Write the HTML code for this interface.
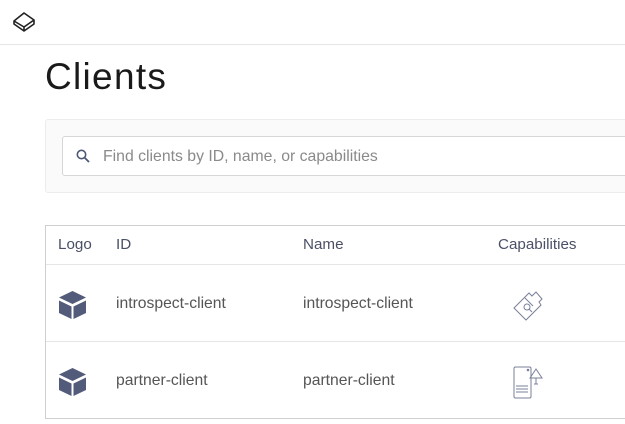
<!DOCTYPE html>
<html><head><style>
body{margin:0;width:625px;height:424px;overflow:hidden;background:#fff;font-family:"Liberation Sans",Arial,sans-serif;position:relative}
.hdr{position:absolute;left:0;top:0;width:625px;height:44px;border-bottom:1px solid #e6e6e6}
h1{position:absolute;left:45px;top:56px;margin:0;font-weight:400;font-size:37px;color:#1a1a1a;letter-spacing:1.3px}
.panel{position:absolute;left:45px;top:119px;width:600px;height:72px;background:#fafafa;border:1px solid #ececec;border-radius:3px}
.inp{position:absolute;left:62px;top:136px;width:600px;height:38px;background:#fff;border:1px solid #d6d6d6;border-radius:3px}
.inp span{position:absolute;left:40px;top:11px;font-size:15.8px;color:#8a8a8a}
.tbl{position:absolute;left:45px;top:225px;width:600px;height:192px;border:1px solid #cfcfcf}
.row{position:absolute;left:0;width:600px;border-bottom:1px solid #e6e6e6}
.t{position:absolute;font-size:15.7px;color:#555}
.h{color:#4a5066;font-size:15.2px}
</style></head><body>
<div class="hdr"><svg style="position:absolute;left:12px;top:11px" width="24" height="22" viewBox="0 0 24 22"><path d="M12 2 L22 9 L12 16 L2 10 Z M2 10 L2 13 L12 20 L22 13 L22 9 M12 16 L12 20" fill="none" stroke="#222" stroke-width="1.6" stroke-linejoin="round"/></svg></div>
<h1>Clients</h1>
<div class="panel"></div>
<div class="inp"><svg style="position:absolute;left:13px;top:12px" width="14" height="14" viewBox="0 0 14 14"><circle cx="5.5" cy="5.5" r="4.2" fill="none" stroke="#4e5878" stroke-width="1.6"/><path d="M8.6 8.6 L13 13" stroke="#4e5878" stroke-width="1.8"/></svg><span>Find clients by ID, name, or capabilities</span></div>
<div class="tbl">
<div class="row" style="top:0;height:38px"></div>
<div class="t h" style="left:12px;top:10px">Logo</div>
<div class="t h" style="left:70px;top:10px">ID</div>
<div class="t h" style="left:257px;top:10px">Name</div>
<div class="t h" style="left:452px;top:10px">Capabilities</div>
<div class="row" style="top:39px;height:76px"></div>
<svg style="position:absolute;left:12px;top:64px" width="30" height="30" viewBox="0 0 30 30"><path d="M14.5 1 L28 7.5 L14.5 14 L1 7.5 Z" fill="#525b7a"/><path d="M1 10.5 L13.5 16.5 L13.5 29 L1 23 Z M15.5 16.5 L28 10.5 L28 23 L15.5 29 Z" fill="#525b7a"/></svg>
<div class="t" style="left:70px;top:69px">introspect-client</div>
<div class="t" style="left:257px;top:69px">introspect-client</div>
<svg style="position:absolute;left:466px;top:62px" width="32" height="34" viewBox="0 0 32 34" fill="none" stroke="#7a809a" stroke-width="1"><path d="M2 20 L17 5 L20 8 L24 4 L30 11 L27 14 L29 17 L14 32 Z"/><circle cx="15" cy="19" r="3"/><path d="M17 21 L20 24 M13 10 L21 18"/></svg>
<div class="row" style="top:116px;height:76px;border:none"></div>
<svg style="position:absolute;left:12px;top:141px" width="30" height="30" viewBox="0 0 30 30"><path d="M14.5 1 L28 7.5 L14.5 14 L1 7.5 Z" fill="#525b7a"/><path d="M1 10.5 L13.5 16.5 L13.5 29 L1 23 Z M15.5 16.5 L28 10.5 L28 23 L15.5 29 Z" fill="#525b7a"/></svg>
<div class="t" style="left:70px;top:146px">partner-client</div>
<div class="t" style="left:257px;top:146px">partner-client</div>
<svg style="position:absolute;left:466px;top:138px" width="34" height="36" viewBox="0 0 34 36" fill="none" stroke="#7a809a" stroke-width="1"><rect x="2" y="3" width="17" height="31" rx="1.5"/><path d="M4 22 H16 M4 25 H16 M4 28 H16"/><path d="M24 5 L30 14 L18 14 Z M24 14 V20 M22 20 H26"/><circle cx="16" cy="6" r="0.8" fill="#7a809a"/></svg>
</div>
</body></html>
